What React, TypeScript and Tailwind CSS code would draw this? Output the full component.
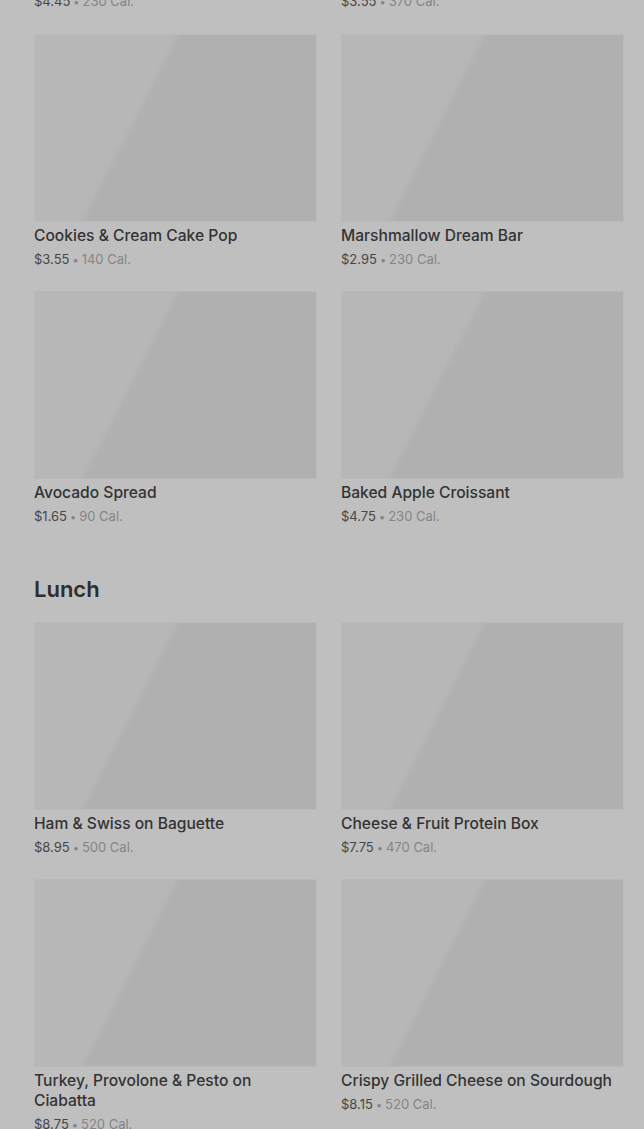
import React from 'react';

type Item = { name: string; price: string; cal: string };

const breakfast: Item[] = [
  { name: 'Cookies & Cream Cake Pop', price: '$3.55', cal: '140 Cal.' },
  { name: 'Marshmallow Dream Bar', price: '$2.95', cal: '230 Cal.' },
  { name: 'Avocado Spread', price: '$1.65', cal: '90 Cal.' },
  { name: 'Baked Apple Croissant', price: '$4.75', cal: '230 Cal.' },
];

const lunch: Item[] = [
  { name: 'Ham & Swiss on Baguette', price: '$8.95', cal: '500 Cal.' },
  { name: 'Cheese & Fruit Protein Box', price: '$7.75', cal: '470 Cal.' },
  { name: 'Turkey, Provolone & Pesto on Ciabatta', price: '$8.75', cal: '520 Cal.' },
  { name: 'Crispy Grilled Cheese on Sourdough', price: '$8.15', cal: '520 Cal.' },
];

const PriceLine = ({ price, cal }: { price: string; cal: string }) => (
  <p className="mt-1 text-[13px] leading-[18px] text-[#858585]">
    <span className="text-[#474747]">{price}</span>
    <span className="mx-[3px] text-[11px]">•</span>
    {cal}
  </p>
);

const Card = ({ item }: { item: Item }) => (
  <div>
    <div className="h-[188px] rounded-[2px] border border-[#b9b9b9] bg-[linear-gradient(117deg,#b7b7b7_37%,#b0b0b0_39%)]"></div>
    <h3 className="mt-1 text-[15.6px] leading-[20px] font-medium text-[#333]">{item.name}</h3>
    <PriceLine price={item.price} cal={item.cal} />
  </div>
);

const App: React.FC = () => {
  return (
    <div className="h-[1129px] overflow-hidden bg-[#bfbfbf] pl-[34px] pr-[20px] font-['Inter',sans-serif]">
      {/* tail of the row scrolled off the top */}
      <div className="-mt-[12px] grid grid-cols-2 gap-x-6">
        <PriceLine price="$4.45" cal="230 Cal." />
        <PriceLine price="$3.55" cal="370 Cal." />
      </div>

      <div className="mt-[23px] grid grid-cols-2 gap-x-6 gap-y-[22px]">
        {breakfast.map((it) => (
          <Card key={it.name} item={it} />
        ))}
      </div>

      <h2 className="mt-[49px] text-[22px] leading-[28px] font-semibold text-[#2e2e2e]">Lunch</h2>

      <div className="mt-[19px] grid grid-cols-2 gap-x-6 gap-y-[22px]">
        {lunch.map((it) => (
          <Card key={it.name} item={it} />
        ))}
      </div>
    </div>
  );
};

export default App;
